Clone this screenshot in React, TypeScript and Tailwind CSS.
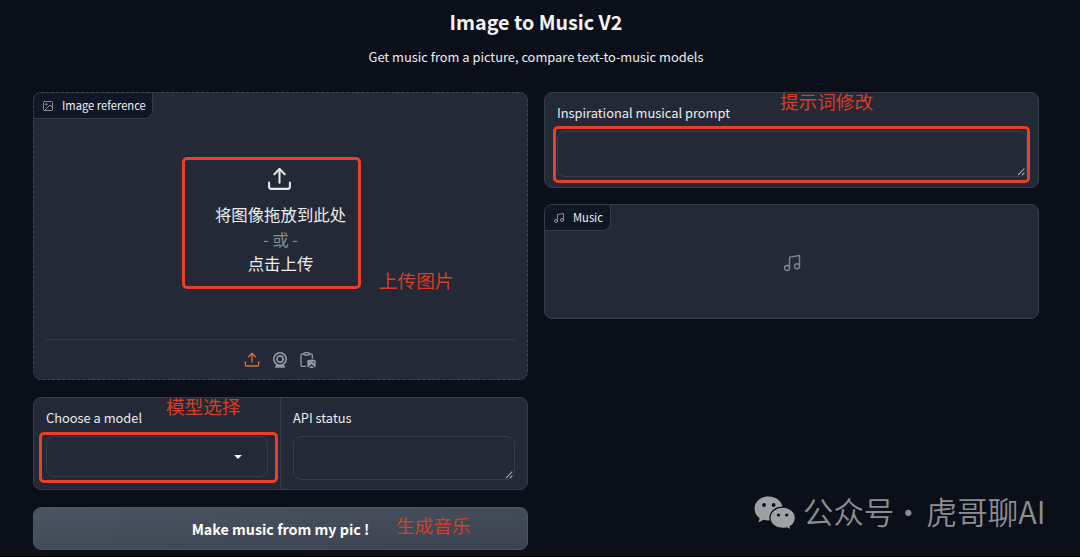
import React from 'react';

type IconProps = { className?: string };

const UploadIcon = ({ className }: IconProps) => (
  <svg className={className} viewBox="0 0 24 24" fill="none" stroke="currentColor" strokeWidth="2" strokeLinecap="round" strokeLinejoin="round">
    <path d="M22 15v4a2 2 0 0 1-2 2H4a2 2 0 0 1-2-2v-4" />
    <polyline points="17 7 12 2 7 7" />
    <line x1="12" y1="2" x2="12" y2="15" />
  </svg>
);

const ImageIcon = ({ className }: IconProps) => (
  <svg className={className} viewBox="0 0 24 24" fill="none" stroke="currentColor" strokeWidth="1.7" strokeLinecap="round" strokeLinejoin="round">
    <rect x="3" y="3" width="18" height="18" rx="2" />
    <circle cx="8.5" cy="8.5" r="1.5" />
    <polyline points="21 15 16 10 5 21" />
  </svg>
);

const MusicIcon = ({ className }: IconProps) => (
  <svg className={className} viewBox="0 0 24 24" fill="none" stroke="currentColor" strokeWidth="1.7" strokeLinecap="round" strokeLinejoin="round">
    <path d="M9 18V5l12-2v13" />
    <circle cx="6" cy="18" r="3" />
    <circle cx="18" cy="16" r="3" />
  </svg>
);

const WebcamIcon = ({ className }: IconProps) => (
  <svg className={className} viewBox="0 0 24 24" fill="none" stroke="currentColor" strokeWidth="2.4">
    <circle cx="12" cy="10.500" r="9.300" />
    <circle cx="12" cy="10.500" r="4.700" />
    <path d="M6 19h12l2 4.500H4z" fill="currentColor" stroke="none" />
  </svg>
);

const PasteImageIcon = ({ className }: IconProps) => (
  <svg className={className} viewBox="0 0 24 24" fill="none" stroke="currentColor" strokeWidth="2">
    <path d="M9 21.500H3.500a2 2 0 0 1-2-2V5a2 2 0 0 1 2-2H6M14 3h2.500a2 2 0 0 1 2 2v5" />
    <rect x="6" y="1" width="8" height="3.500" rx="1.500" />
    <path fill="currentColor" stroke="none" fillRule="evenodd" d="M13 11.500h8.500a2 2 0 0 1 2 2v7.500a2 2 0 0 1-1.200 1.800L17.300 18l-5 5.300A2 2 0 0 1 11 21.500v-8a2 2 0 0 1 2-2zM20.300 13.800a1.300 1.300 0 1 0 0 2.600 1.300 1.300 0 0 0 0-2.600z" />
    <path d="M13.500 24l3.800-3.500 3.800 3.500z" fill="currentColor" stroke="none" />
  </svg>
);

const ResizeGrip = ({ className }: IconProps) => (
  <svg className={className} viewBox="0 0 8 8" fill="none" stroke="#a7aaaf" strokeWidth="1.1">
    <path d="M0 7l6.300-6.300M4 7l2.300-2.300" />
  </svg>
);

const WeChatIcon = ({ className }: IconProps) => (
  <svg className={className} viewBox="0 0 41 34">
    <path fill="#a0a1a4" d="M14.500 0.500C6.500 0.500 0.500 6 0.500 12.800c0 4 2 7.200 5.200 9.500L4.500 26.500l5-2.700c1.600.5 3.300.7 5 .7 8 0 14.200-5.300 14.200-11.900S22.500.5 14.500.5z" />
    <path fill="#a0a1a4" stroke="#0b0f19" strokeWidth="1.300" d="M28.700 11.200c-7.200 0-12.700 4.700-12.700 10.700s5.500 10.600 12.700 10.600c1.500 0 3-.2 4.300-.6l4.200 2.300-1-3.700c3.200-2 5.200-5 5.200-8.600 0-6-5.500-10.700-12.700-10.700z" />
    <g fill="#0b0f19">
      <circle cx="10" cy="9" r="1.900" />
      <circle cx="19.600" cy="9" r="1.900" />
      <circle cx="24.500" cy="19" r="1.600" />
      <circle cx="32.700" cy="19" r="1.600" />
    </g>
  </svg>
);

const Note = ({ className, children }: { className: string; children: React.ReactNode }) => (
  <span className={`absolute whitespace-nowrap text-[18.6px] leading-6 font-normal text-[#d93d26] ${className}`}>{children}</span>
);

const BlockLabel = ({ icon, children, className }: { icon: React.ReactNode; children: React.ReactNode; className: string }) => (
  <div className={`flex h-[26px] items-center rounded-br-lg border-r border-b border-[#353c49] bg-[#111726] pl-[8px] text-[#f0f1f4] ${className}`}>
    {icon}
    <span className="relative -top-px ml-2 text-[11.2px] leading-5 whitespace-nowrap">{children}</span>
  </div>
);

export default function App() {
  return (
    <div className="relative h-[557px] w-[1080px] overflow-hidden border-b border-black bg-[#0b0f19] font-['Noto_Sans_CJK_SC',sans-serif] text-[#eceef1]">
      <header className="flex flex-col items-center pr-2">
        <h1 className="mt-[7px] text-[19.7px] leading-[30px] font-bold text-[#f3f4f6]">Image to Music V2</h1>
        <p className="mt-[10px] text-[12.85px] leading-5">Get music from a picture, compare text-to-music models</p>
      </header>

      <main className="mt-[25px] flex gap-4 pl-[33px]">
        <section className="flex w-[495px] flex-col">
          <div className="relative flex h-[288px] flex-col overflow-hidden rounded-lg border border-dashed border-[#3b4351] bg-[#232936]">
            <BlockLabel className="w-[119px]" icon={<ImageIcon className="size-3 text-[#9ca3af]" />}>Image reference</BlockLabel>
            <div className="flex grow flex-col items-center pt-[48px]">
              <UploadIcon className="mr-[3px] size-[25px] text-[#e5e7eb]" />
              <div className="mt-[10px] flex flex-col items-center text-[16.400px] leading-[24.700px]">
                <span>将图像拖放到此处</span>
                <span className="text-[#868c98]">- 或 -</span>
                <span>点击上传</span>
              </div>
            </div>
            <div className="mx-3 flex h-10 items-center justify-center gap-3 border-t border-[#363d4a] pr-px text-[#9299a6]">
              <UploadIcon className="size-4 text-[#e0702a]" />
              <WebcamIcon className="size-4" />
              <PasteImageIcon className="size-4" />
            </div>
            <div className="absolute top-[64px] left-[148px] h-[132px] w-[179px] rounded-[5px] border-3 border-[#e8402a]" />
            <Note className="top-[175px] left-[345px]">上传图片</Note>
          </div>

          <div className="relative mt-[17px] flex h-[93px] rounded-lg border border-[#363d4a] bg-[#232936]">
            <div className="w-[247px] border-r border-[#363d4a] pt-[10px] pl-3">
              <label className="block text-[12.85px] leading-5">Choose a model</label>
              <div className="mt-[8px] flex h-[41px] w-[222px] items-center justify-end rounded-lg border border-[#363d4a] pr-[25px]">
                <svg className="h-1 w-2" viewBox="0 0 8 4"><path d="M0 0h8L4 4z" fill="#f3f4f6" /></svg>
              </div>
            </div>
            <div className="pt-[10px] pl-3">
              <label className="block text-[12.85px] leading-5">API status</label>
              <div className="mt-[8px] flex h-[44px] w-[222px] items-end justify-end rounded-lg border border-[#363d4a]">
                <ResizeGrip className="size-2" />
              </div>
            </div>
            <div className="absolute top-[34px] left-[5px] h-[51px] w-[239px] rounded-[5px] border-3 border-[#e8402a]" />
            <Note className="-top-[4px] left-[132px]">模型选择</Note>
          </div>

          <button className="relative mt-[17px] flex h-[43px] items-center justify-center rounded-lg border border-[#4b5563] bg-linear-to-br from-[#4b5563] to-[#3b4150] text-[14.3px] leading-6 font-bold text-white">
            Make music from my pic !
            <Note className="top-[5px] left-[362px]">生成音乐</Note>
          </button>
        </section>

        <section className="flex w-[495px] flex-col">
          <div className="relative h-[96px] rounded-lg border border-[#363d4a] bg-[#232936] pt-[10px] pl-3">
            <label className="block text-[12.85px] leading-5">Inspirational musical prompt</label>
            <div className="mt-[8px] flex h-[46px] w-[470px] items-end justify-end rounded-lg border border-[#363d4a]">
              <ResizeGrip className="size-2" />
            </div>
            <div className="absolute top-[33px] left-[8px] h-[57px] w-[477px] rounded-[5px] border-3 border-[#e8402a]" />
            <Note className="-top-[4px] left-[235px]">提示词修改</Note>
          </div>
          <div className="mt-4 flex h-[115px] flex-col overflow-hidden rounded-lg border border-[#363d4a] bg-[#232936]">
            <BlockLabel className="w-[66px]" icon={<MusicIcon className="size-3 text-[#9ca3af]" />}>Music</BlockLabel>
            <div className="flex justify-center pt-[22px]">
              <MusicIcon className="size-5 text-[#7d838f]" />
            </div>
          </div>
        </section>
      </main>

      <div className="absolute top-[491px] left-[754px] flex items-center font-[350] text-[#8d8e92]">
        <WeChatIcon className="relative top-[2px] h-[34px] w-[41px]" />
        <span className="ml-[8px] text-[30.400px] leading-10">公众号</span>
        <span className="w-[31px] text-center text-[30px] leading-10"><span className="-mr-4 -ml-[19px]">·</span></span>
        <span className="ml-px text-[30.700px] leading-10">虎哥聊AI</span>
      </div>
    </div>
  );
}
